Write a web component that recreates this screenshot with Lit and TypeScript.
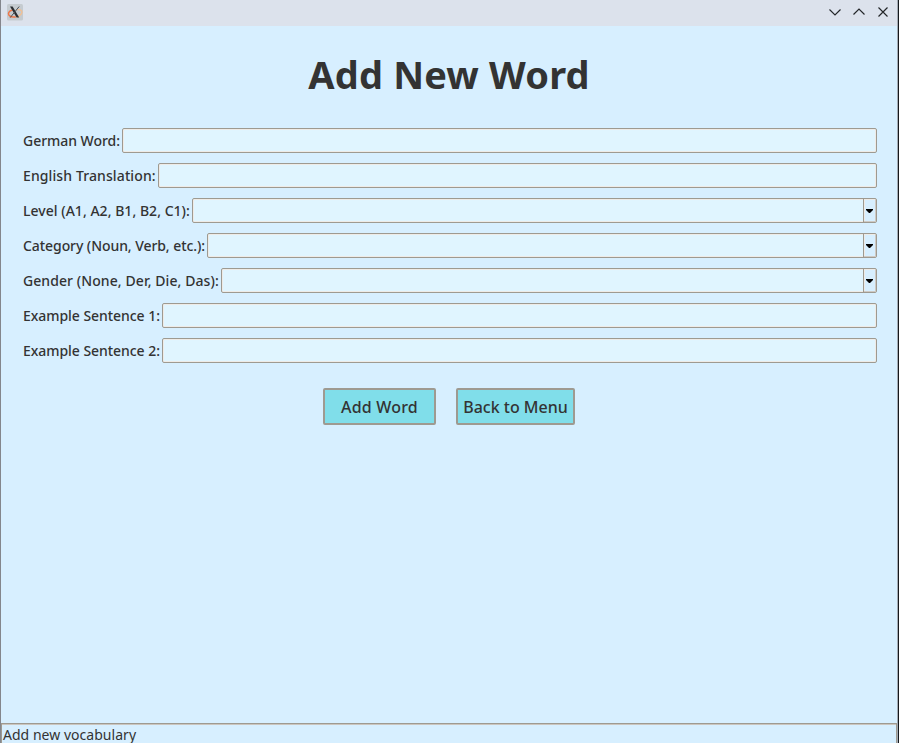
import { LitElement, html, css, nothing } from "lit";
import { customElement, property } from "lit/decorators.js";
import { styleMap } from "lit/directives/style-map.js";

@customElement("window-bar")
class WindowBar extends LitElement {
  static styles = css`
    :host { display: flex; height: 26px; box-sizing: border-box; align-items: center; justify-content: space-between; padding: 0 7px 2px 6px; background: #dce2ec; }
    svg { display: block; }
    .controls { display: flex; gap: 10px; }
    .line { fill: none; stroke: #232629; stroke-width: 1.15; }
  `;
  render() {
    return html`
      <svg width="17" height="17" viewBox="0 0 17 17">
        <rect x="0" y="0" width="16" height="16.5" rx="1.5" fill="#c5cbd0" />
        <path d="M10.5 5.5C14.8 5.5 16 7.8 14.2 10 12.8 11.8 10.8 12.8 8.8 13" fill="none" stroke="#f0c096" stroke-width="1.4" />
        <path d="M5.6 6C1.6 7 .8 9.4 2 11.2 3.2 12.9 5.8 13.3 8.8 13" fill="none" stroke="#ee7547" stroke-width="1.5" />
        <path d="M3 2.5H5.6L12.2 13.6H9.6Z" fill="#2a2e32" />
        <path d="M12.2 2.5L3.2 13.6" stroke="#4a4e52" stroke-width="1" />
      </svg>
      <div class="controls">
        <svg width="14" height="14" viewBox="0 0 14 14"><path class="line" d="M1.5 4.5L7 10L12.5 4.5" /></svg>
        <svg width="14" height="14" viewBox="0 0 14 14"><path class="line" d="M1.5 9.5L7 4L12.5 9.5" /></svg>
        <svg width="14" height="14" viewBox="0 0 14 14"><path class="line" d="M2.5 2.5L11.5 11.5M11.5 2.5L2.5 11.5" /></svg>
      </div>
    `;
  }
}

@customElement("form-row")
class FormRow extends LitElement {
  @property() label = "";
  @property({ type: Number }) labelWidth = 100;
  @property({ type: Number }) tracking = 0;
  @property({ type: Boolean }) combo = false;
  static styles = css`
    :host { display: flex; height: 25px; }
    .label { flex: none; line-height: 25px; white-space: nowrap; font-weight: 500; }
    .field { flex: 1; display: flex; justify-content: flex-end; box-sizing: border-box; border: 1px solid #9e9a91; border-radius: 2px; background: #e0f5ff; box-shadow: inset -1px -1px #eeebe7, inset 1px 1px #eeebe7; }
    .drop { display: flex; align-items: center; justify-content: center; box-sizing: border-box; width: 13px; padding: 1px 1px 0 0; border-left: 1px solid #9e9a91; background: #d7efff; box-shadow: inset -1px -1px #cfcac4, inset 1px 1px #eeebe7; }
    svg { display: block; }
  `;
  render() {
    return html`
      <span class="label" style=${styleMap({ width: `${this.labelWidth}px`, letterSpacing: `${this.tracking}px` })}>${this.label}</span>
      <div class="field">
        ${this.combo
          ? html`<div class="drop"><svg width="7" height="4" viewBox="0 0 7 4"><path d="M0 0H7V1L4 4H3L0 1Z" fill="#000" /></svg></div>`
          : nothing}
      </div>
    `;
  }
}

const rows = [
  { label: "German Word:", width: 99, tracking: -0.04 },
  { label: "English Translation:", width: 135, tracking: 0.11 },
  { label: "Level (A1, A2, B1, B2, C1):", width: 169, tracking: 0.03, combo: true },
  { label: "Category (Noun, Verb, etc.):", width: 184, tracking: -0.07, combo: true },
  { label: "Gender (None, Der, Die, Das):", width: 198, tracking: 0.08, combo: true },
  { label: "Example Sentence 1:", width: 139, tracking: -0.05 },
  { label: "Example Sentence 2:", width: 139, tracking: -0.05 },
];

@customElement("app-root")
class AppRoot extends LitElement {
  static styles = css`
    :host { display: flex; flex-direction: column; box-sizing: border-box; width: 899px; height: 743px; overflow: hidden; border-left: 1px solid #84868c; border-right: 1px solid #15181c; background: #d7efff; color: #333; font: 14px/19px "Noto Sans", sans-serif; }
    .window { flex: 1; display: flex; flex-direction: column; border-right: 1px solid #a3abb4; }
    .page { flex: 1; padding: 0 20px 0 22px; }
    h1 { margin: 21px 2px 27px 0; height: 54px; font-size: 38px; line-height: 54px; font-weight: 700; text-align: center; letter-spacing: 0.18px; }
    .form { display: flex; flex-direction: column; gap: 10px; }
    .actions { display: flex; justify-content: center; gap: 20px; margin: 25px 2px 0 0; }
    .button { box-sizing: border-box; height: 37px; border: 2px solid #9e9a91; border-radius: 2px; background: #80deea; font: 500 16px/34px "Noto Sans", sans-serif; text-align: center; white-space: nowrap; }
    .add { width: 113px; letter-spacing: 0.2px; }
    .back { width: 119px; }
    .status { height: 20px; box-sizing: border-box; border: 1px solid #9e9a91; border-bottom: 0; box-shadow: inset 0 1px #cbc5be; padding: 1px 1px 0; line-height: 20px; white-space: nowrap; letter-spacing: 0.03px; }
  `;
  render() {
    return html`
      <div class="window">
        <window-bar></window-bar>
        <main class="page">
          <h1>Add New Word</h1>
          <div class="form">
            ${rows.map((r) => html`<form-row .label=${r.label} .labelWidth=${r.width} .tracking=${r.tracking} .combo=${!!r.combo}></form-row>`)}
          </div>
          <div class="actions">
            <div class="button add">Add Word</div>
            <div class="button back">Back to Menu</div>
          </div>
        </main>
        <footer class="status">Add new vocabulary</footer>
      </div>
    `;
  }
}
